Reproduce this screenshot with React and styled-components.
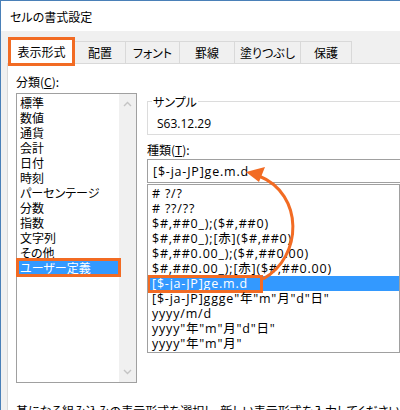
import styled, { createGlobalStyle } from "styled-components";

const ORANGE = "#f26b23";
const SELECT = "#3399ff";
const LINE = "#a0a0a0";
const TAB_LINE = "#d9d9d9";

const GlobalStyle = createGlobalStyle`
  html, body { margin: 0; padding: 0; background: #fff; }
  body {
    font-family: "Noto Sans CJK JP", sans-serif;
    font-size: 12px;
    color: #000;
    font-feature-settings: "palt";
  }
`;

const Window = styled.div`
  position: relative;
  width: 400px;
  height: 410px;
  box-sizing: border-box;
  overflow: hidden;
  background: #f0f0f0;
  border-top: 1px solid #4a80b8;
  border-left: 1px solid #4a80b8;
`;

const TitleBar = styled.div`
  height: 30px;
  background: #fff;
  display: flex;
  align-items: center;
  padding-left: 9px;
  line-height: 15px;
`;

const Body = styled.div`
  width: 440px;
  padding: 6px 0 0 6px;
`;

const TabStrip = styled.div`
  display: flex;
  align-items: flex-end;
  height: 26px;
  padding-left: 1px;
`;

const Tab = styled.div`
  width: ${(p) => p.$w}px;
  height: 22px;
  box-sizing: border-box;
  border-top: 1px solid ${TAB_LINE};
  border-right: 1px solid ${TAB_LINE};
  background: #f0f0f0;
  display: flex;
  align-items: center;
  justify-content: center;
  white-space: nowrap;
`;

const ActiveTab = styled.div`
  position: relative;
  z-index: 1;
  width: 67px;
  height: 29px;
  box-sizing: border-box;
  margin-bottom: -3px;
  border: 3px solid ${ORANGE};
  background: #fff;
  display: flex;
  align-items: center;
  justify-content: center;
`;

const Panel = styled.div`
  height: 400px;
  box-sizing: border-box;
  background: #fff;
  border: 1px solid ${TAB_LINE};
  padding: 10px 0 0 8px;
`;

const Columns = styled.div`
  display: flex;
  gap: 10px;
`;

const LeftCol = styled.div`
  width: 121px;
  flex-shrink: 0;
`;

const RightCol = styled.div`
  width: 270px;
  flex-shrink: 0;
  padding-top: 20px;
`;

const Label = styled.div`
  line-height: 15px;
  height: 15px;
  margin-bottom: ${(p) => p.$gap}px;
`;

const Key = styled.span`
  text-decoration: underline;
`;

const CategoryBox = styled.div`
  display: flex;
  height: 290px;
  box-sizing: border-box;
  border: 1px solid ${LINE};
`;

const CategoryItems = styled.div`
  flex: 1;
  padding: 1px 1px 0 2px;
`;

const Row = styled.div`
  position: relative;
  line-height: 15px;
  height: 15px;
  white-space: nowrap;
  padding-left: ${(p) => p.$indent}px;
  background: ${(p) => (p.$selected ? SELECT : "transparent")};
  color: ${(p) => (p.$selected ? "#fff" : "#000")};
`;

const MarkedRow = styled(Row)`
  &::after {
    content: "";
    position: absolute;
    top: ${(p) => p.$top}px;
    left: ${(p) => p.$left}px;
    width: ${(p) => p.$w}px;
    height: ${(p) => p.$h}px;
    box-sizing: border-box;
    border: 3px solid ${ORANGE};
  }
`;

const ScrollBar = styled.div`
  width: 17px;
  background: #f0f0f0;
  display: flex;
  flex-direction: column;
  justify-content: space-between;
  align-items: center;
  padding: 7px 0;
`;

const GroupBox = styled.fieldset`
  margin: 0;
  padding: 7px 9px 3px;
  border: 1px solid #dcdcdc;
  line-height: 15px;
  font-family: "Open Sans", "Noto Sans CJK JP", sans-serif;

  legend {
    padding: 0 1px;
    margin-left: -5px;
    line-height: 15px;
    font-family: "Noto Sans CJK JP", sans-serif;
  }
`;

const FieldLabel = styled(Label)`
  margin-top: 7px;
`;

const TextField = styled.div`
  height: 24px;
  box-sizing: border-box;
  border: 1px solid ${LINE};
  display: flex;
  align-items: center;
  padding-left: 5px;
  font-family: "Open Sans", "Noto Sans CJK JP", sans-serif;
  font-size: 12.5px;
  letter-spacing: 0.8px;
`;

const FormatBox = styled.div`
  width: 253px;
  height: 169px;
  box-sizing: border-box;
  margin-top: 1px;
  padding-top: 1px;
  border: 1px solid ${LINE};
  overflow: hidden;
  font-family: "Open Sans", "Noto Sans CJK JP", sans-serif;
  font-size: 12.5px;
  letter-spacing: 0.8px;
`;

const Hint = styled.div`
  margin-top: 20px;
  line-height: 15px;
  white-space: nowrap;
`;

const Arrow = styled.svg`
  position: absolute;
  left: -1px;
  top: -1px;
  pointer-events: none;
  z-index: 5;
`;

const tabs = [
  { label: "配置", w: 51 },
  { label: "フォント", w: 54 },
  { label: "罫線", w: 55 },
  { label: "塗りつぶし", w: 66 },
  { label: "保護", w: 51 },
];

const categories = [
  "標準",
  "数値",
  "通貨",
  "会計",
  "日付",
  "時刻",
  "パーセンテージ",
  "分数",
  "指数",
  "文字列",
  "その他",
];

const formats = [
  "# ?/?",
  "# ??/??",
  "$#,##0_);($#,##0)",
  "$#,##0_);[赤]($#,##0)",
  "$#,##0.00_);($#,##0.00)",
  "$#,##0.00_);[赤]($#,##0.00)",
  "[$-ja-JP]ge.m.d",
  '[$-ja-JP]ggge"年"m"月"d"日"',
  "yyyy/m/d",
  'yyyy"年"m"月"d"日"',
  'yyyy"年"m"月"',
];

const SELECTED_FORMAT = 6;

function Chevron({ up }) {
  return (
    <svg width="9" height="6" viewBox="0 0 9 6">
      <path
        d={up ? "M1 5 L4.5 1.5 L8 5" : "M1 1 L4.5 4.5 L8 1"}
        fill="none"
        stroke="#c4c4c4"
        strokeWidth="1.4"
      />
    </svg>
  );
}

export default function App() {
  return (
    <>
      <GlobalStyle />
      <Window>
        <TitleBar>セルの書式設定</TitleBar>
        <Body>
          <TabStrip>
            <ActiveTab>表示形式</ActiveTab>
            {tabs.map((t) => (
              <Tab key={t.label} $w={t.w}>
                {t.label}
              </Tab>
            ))}
          </TabStrip>
          <Panel>
            <Columns>
              <LeftCol>
                <Label $gap={4}>
                  分類(<Key>C</Key>):
                </Label>
                <CategoryBox>
                  <CategoryItems>
                    {categories.map((c) => (
                      <Row key={c} $indent={1}>
                        {c}
                      </Row>
                    ))}
                    <MarkedRow
                      $indent={1}
                      $selected
                      $top={-2}
                      $left={-3}
                      $w={105}
                      $h={19}
                    >
                      ユーザー定義
                    </MarkedRow>
                  </CategoryItems>
                  <ScrollBar>
                    <Chevron up />
                    <Chevron />
                  </ScrollBar>
                </CategoryBox>
              </LeftCol>
              <RightCol>
                <GroupBox>
                  <legend>サンプル</legend>
                  S63.12.29
                </GroupBox>
                <FieldLabel $gap={2}>
                  種類(<Key>T</Key>):
                </FieldLabel>
                <TextField>[$-ja-JP]ge.m.d</TextField>
                <FormatBox>
                  {formats.map((f, i) =>
                    i === SELECTED_FORMAT ? (
                      <MarkedRow
                        key={f}
                        $indent={4}
                        $selected
                        $top={-1}
                        $left={-1}
                        $w={116}
                        $h={18}
                      >
                        {f}
                      </MarkedRow>
                    ) : (
                      <Row key={f} $indent={4}>
                        {f}
                      </Row>
                    )
                  )}
                </FormatBox>
              </RightCol>
            </Columns>
            <Hint>
              基になる組み込みの表示形式を選択し、新しい表示形式を入力してください。
            </Hint>
          </Panel>
        </Body>
        <Arrow width="400" height="410" viewBox="0 0 400 410">
          <path
            d="M 263 279 C 303 257, 304 194, 259 176"
            fill="none"
            stroke={ORANGE}
            strokeWidth="3"
          />
          <polygon points="246,172 265,167 259,182" fill={ORANGE} />
        </Arrow>
      </Window>
    </>
  );
}
